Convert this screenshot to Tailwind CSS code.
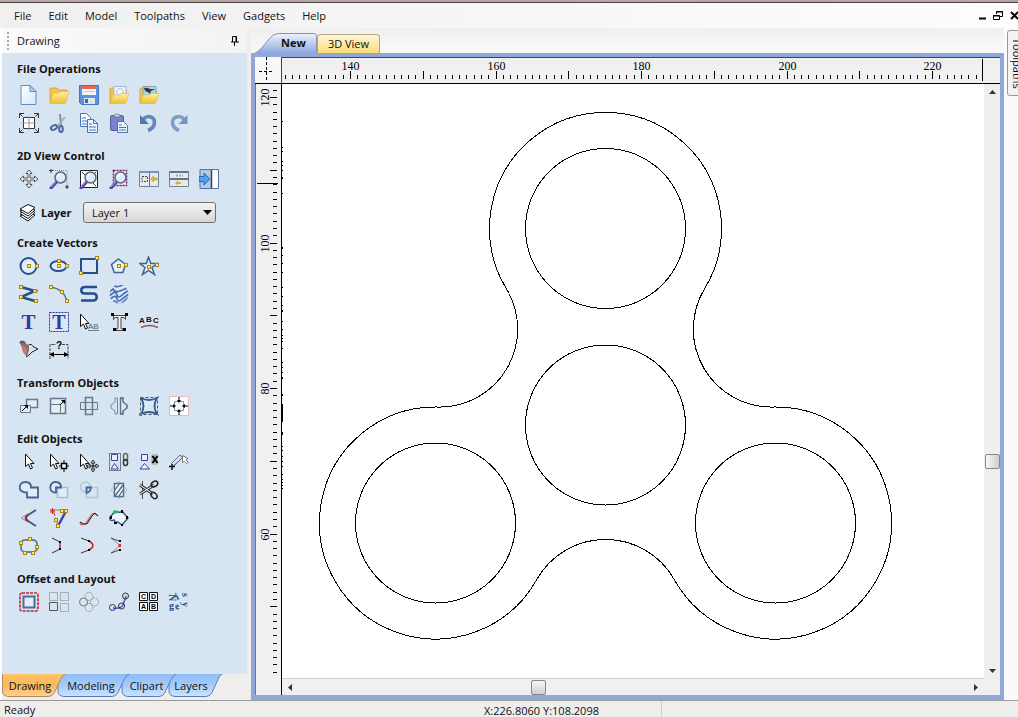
<!DOCTYPE html>
<html lang="en">
<head>
<meta charset="utf-8">
<title>Drawing</title>
<script src="https://cdn.jsdelivr.net/npm/@tailwindcss/browser@4"></script>
</head>
<body class="h-screen overflow-hidden bg-[#f0eeed] font-['Open_Sans','Noto_Sans',sans-serif] text-[11px] leading-4 text-[#111]">

<!-- shared drawing parts -->
<svg class="absolute h-0 w-0" aria-hidden="true">
  <defs>
    <linearGradient id="gold" x1="0" y1="0" x2="0" y2="1"><stop offset="0" stop-color="#fff0a0"/><stop offset="1" stop-color="#ecc034"/></linearGradient>
    <linearGradient id="page" x1="0" y1="0" x2="1" y2="1"><stop offset="0" stop-color="#fff"/><stop offset="1" stop-color="#d4e8fb"/></linearGradient>
    <linearGradient id="blueTab" x1="0" y1="0" x2="0" y2="1"><stop offset="0" stop-color="#8fbdf8"/><stop offset=".5" stop-color="#a5cbfb"/><stop offset="1" stop-color="#cfe2fb"/></linearGradient>
    <linearGradient id="orangeTab" x1="0" y1="0" x2="0" y2="1"><stop offset="0" stop-color="#fdc567"/><stop offset=".5" stop-color="#fcb659"/><stop offset="1" stop-color="#fdd29a"/></linearGradient>
    <linearGradient id="newTab" x1="0" y1="0" x2="0" y2="1"><stop offset="0" stop-color="#eef3fd"/><stop offset="1" stop-color="#8ea9e0"/></linearGradient>
    <symbol id="h" viewBox="0 0 4 4"><rect x=".5" y=".5" width="3" height="3" fill="#ffee55" stroke="#a8851c"/></symbol>
    <symbol id="lens" viewBox="0 0 20 20">
      <path d="M2 19 8 12.500" stroke="#4a3fa8" stroke-width="3" stroke-linecap="round"/>
      <path d="M2 18 7 12.500" stroke="#b9b2f0" stroke-width="1"/>
      <circle cx="11.500" cy="8.500" r="5.500" fill="#dcecf8" stroke="#5f6878" stroke-width="1.500"/>
      <path d="M8.500 7.500q1-2 3-2.500" stroke="#fff" stroke-width="1.500" fill="none"/>
    </symbol>
    <symbol id="arrow" viewBox="0 0 20 20"><path d="M6.500 2v12.500l3-2.500 2 5 2-1-2-4.500H15z" fill="#fff" stroke="#111"/></symbol>
    <symbol id="arrowSide" viewBox="0 0 20 20"><path d="M1.500 2v12.500l3-2.500 2 5 2-1-2-4.500H10z" fill="#fff" stroke="#111"/></symbol>
  </defs>
</svg>

<div class="flex h-full flex-col">
  <div class="h-[3px] shrink-0 border-b border-[#444] bg-[#b8a4a4]"></div>

  <header class="flex h-[25px] shrink-0 items-center justify-between bg-linear-to-r from-[#f1f0f0] to-[#fdfdfd] pl-[14px]">
    <nav class="flex gap-[17px]">
      <button>File</button><button>Edit</button><button>Model</button><button>Toolpaths</button><button>View</button><button>Gadgets</button><button>Help</button>
    </nav>
    <div class="flex items-center gap-1">
      <button aria-label="Minimize"><svg class="size-3" viewBox="0 0 12 12"><path d="M3 8.500h7" stroke="#000" stroke-width="2"/></svg></button>
      <button aria-label="Restore"><svg class="size-3" viewBox="0 0 12 12" fill="none" stroke="#000"><path d="M4.500 4V1.500h6v5H8M4 2h7"/><path d="M1.500 5.500h6v4h-6zM1 6h7"/></svg></button>
      <button aria-label="Close"><svg class="h-3 w-[10px]" viewBox="0 0 10 12"><path d="m3 2 7 7M3 9l7-7" stroke="#000" stroke-width="2"/></svg></button>
    </div>
  </header>

  <main class="flex min-h-0 flex-1">
    <!-- tool panel -->
    <aside class="flex w-[247px] shrink-0 flex-col border-l-2 border-white">
      <div class="flex h-[25px] shrink-0 items-center gap-2 bg-linear-to-r from-[#fafafa] to-[#f3f3f3] pr-[7px] pl-[5px]">
        <span class="h-[18px] border-l-2 border-dotted border-[#aaa]"></span>
        <span class="flex-1">Drawing</span>
        <button aria-label="Pin"><svg class="size-[10px]" viewBox="0 0 10 10" fill="none" stroke="#000"><path d="M2.500 6V.5h4V6M6 1v5M1 6h8M4.500 6v4"/></svg></button>
      </div>

      <div class="flex-1 overflow-hidden bg-[#d7e4f1] pl-[15px]">
        <section>
          <h2 class="pt-[6px] pb-[2px] font-bold leading-5">File Operations</h2>
          <div class="flex h-7 items-center gap-[10px] pl-[2px]">
            <button aria-label="New"><svg class="size-5" viewBox="0 0 20 20"><path d="M2 .5h9l6 6v13H2z" fill="url(#page)" stroke="#5c8fc4"/><path d="M11 .5v6h6z" fill="#b4d4f4" stroke="#5c8fc4"/></svg></button>
            <button aria-label="Open"><svg class="size-5" viewBox="0 0 20 20"><path d="M1 18V4l1-1h6l2 2h8v5" fill="#f1c64c" stroke="#d8a836"/><path d="M1 18.500 4 8h6l2-1.500h8L17 17q-.5 1.500-2 1.500z" fill="url(#gold)" stroke="#e0b23a" stroke-width=".6"/></svg></button>
            <button aria-label="Save"><svg class="size-5" viewBox="0 0 20 20"><path d="M.5.5h19v19h-17l-2-2z" fill="#5b94d8" stroke="#4179bd"/><path d="M3 1h14v9H3z" fill="#f3f6fb"/><path d="M3 1h14v3H3z" fill="#e8694e"/><path d="M5 13h11v6H5z" fill="#dfe5ec"/><path d="M6 14h3v4H6z" fill="#416a9c"/><path d="M4 6.500h12" stroke="#c9ced6"/></svg></button>
            <button aria-label="Import vectors"><svg class="size-5" viewBox="0 0 20 20"><path d="M1 18V4l1-1h4l2 2h9v5" fill="#f1c64c" stroke="#d8a836"/><path d="M5 1.500h12v10H5z" fill="#f2f7fd" stroke="#9eb6cf"/><circle cx="11" cy="7" r="3.500" fill="none" stroke="#b5c0cc"/><path d="M1 18.500 4 10h6l2-1.500h8L17 17q-.5 1.500-2 1.500z" fill="url(#gold)" stroke="#e0b23a" stroke-width=".6"/></svg></button>
            <button aria-label="Import bitmap"><svg class="size-5" viewBox="0 0 20 20"><path d="M1 18V4l1-1h4l2 2h9v5" fill="#f1c64c" stroke="#d8a836"/><path d="M4 1.500h13v9H4z" fill="#9fdcea" stroke="#7faab8"/><path d="M5 3q3-1 6 1h5l-4 2-1 3-2-2q-3 0-4-4" fill="#4a3030"/><path d="M1 18.500 4 10h6l2-1.500h8L17 17q-.5 1.500-2 1.500z" fill="url(#gold)" stroke="#e0b23a" stroke-width=".6"/></svg></button>
          </div>
          <div class="flex h-7 items-center gap-[10px] pl-[2px]">
            <button aria-label="Job setup"><svg class="size-5" viewBox="0 0 20 20"><path d="M4.500 4.500h11v11h-11z" fill="#fff" stroke="#333"/><path d="M10 3v14M3 10h14" stroke="#999"/><path d="M.5 5V.5H5M15 .5h4.500V5M.5 15v4.500H5M15 19.500h4.500V15M1 1l2.500 2.500M19 1l-2.500 2.500M1 19l2.500-2.500M19 19l-2.500-2.500" fill="none" stroke="#333"/></svg></button>
            <button aria-label="Cut"><svg class="size-5" viewBox="0 0 20 20" fill="none"><path d="m11 1 1 11" stroke="#7d91a8" stroke-width="2"/><path d="m16 4-8 10" stroke="#a1b1c2" stroke-width="2"/><ellipse cx="5" cy="14.500" rx="3.300" ry="2" stroke="#48689c" stroke-width="2" transform="rotate(-25 5 14.500)"/><ellipse cx="12" cy="16" rx="1.800" ry="3" stroke="#48689c" stroke-width="2"/></svg></button>
            <button aria-label="Copy"><svg class="size-5" viewBox="0 0 20 20" stroke="#4376b4"><path d="M1.500.5h6l4 4v9h-10z" fill="#f7fbff"/><path d="M3 5h4m-4 3h6m-6 3h6" /><path d="M8.500 6.500h6l4 4v9h-10z" fill="#eef6ff"/><path d="M14.500 6.500v4h4M10 11h3m-3 3h7m-7 3h7" fill="none"/></svg></button>
            <button aria-label="Paste"><svg class="size-5" viewBox="0 0 20 20"><rect x="1.500" y="2.500" width="13" height="15" rx="1.500" fill="#7b80cf" stroke="#565ba8"/><path d="M5 4V2h1.500L8 .5 9.500 2H11v2z" fill="#d9d9df" stroke="#777"/><path d="M8.500 8.500h6l4 4v7h-10z" fill="#eef6ff" stroke="#4376b4"/><path d="M10 12h3m-3 2.500h7M10 17h7" stroke="#4376b4"/></svg></button>
            <button aria-label="Undo"><svg class="size-5" viewBox="0 0 20 20" fill="none"><path d="M4 6.500C9 1 16 4 15.500 10c-.3 3-3 6-6.500 7.500" stroke="#6389bc" stroke-width="3.600"/><path d="M1 2v9h9z" fill="#5378ae"/></svg></button>
            <button aria-label="Redo"><svg class="size-5" viewBox="0 0 20 20" fill="none"><path d="M15.500 6.500C10 1 3 4 3.500 10c.3 3 3 6 6.500 7.500" stroke="#7d9fc5" stroke-width="3.600"/><path d="M18.500 2v9h-9z" fill="#7594bb"/></svg></button>
          </div>
        </section>

        <section>
          <h2 class="pt-[10px] font-bold leading-[18px]">2D View Control</h2>
          <div class="flex h-7 items-center gap-[10px] pl-[2px]">
            <button aria-label="Pan"><svg class="size-5" viewBox="0 0 20 20"><path d="m10 1 3 3.500h-2V9h4.500V7L19 10l-3.500 3v-2H11v4.500h2L10 19l-3-3.500h2V11H4.500v2L1 10l3.500-3v2H9V4.500H7z" fill="#f2f2f2" stroke="#555"/></svg></button>
            <button aria-label="Zoom"><svg class="size-5" viewBox="0 0 20 20"><path d="M2 1.500h16v17" fill="none" stroke="#7e8b9b" stroke-dasharray="1 1"/><path d="M0 1.500h4M2 0v4M16 18h4M18 16v4" stroke="#334"/><use href="#lens"/></svg></button>
            <button aria-label="Zoom to fit"><svg class="size-5" viewBox="0 0 20 20"><path d="M1.500 1.500h17v17h-17z" fill="#fff" stroke="#222"/><path d="m3 3 3 3m11-3-3 3m3 11-3-3" stroke="#333"/><use href="#lens"/></svg></button>
            <button aria-label="Zoom selected"><svg class="size-5" viewBox="0 0 20 20"><path d="M4.500 1.500h13v15h-13z" fill="#f5e9f6" stroke="#6b1d6b" stroke-width="1.500" stroke-dasharray="2 1"/><use href="#lens"/></svg></button>
            <button aria-label="Tile vertically"><svg class="size-5" viewBox="0 0 20 20"><path d="M.5 2.500h19v15H.5z" fill="#e7e9ec" stroke="#76808e"/><path d="M.5 3h19" stroke="#7c8fc6" stroke-width="2"/><path d="M10.500 3v14" stroke="#69738a"/><path d="M3 7.500h5.500v5H3z" fill="none" stroke="#444" stroke-dasharray="2 1"/><path d="m11.500 10 3-3v2H18v2h-3.500v2z" fill="#e5bd2b" stroke="#ad8a15" stroke-width=".5"/></svg></button>
            <button aria-label="Tile horizontally"><svg class="size-5" viewBox="0 0 20 20"><path d="M.5 2.500h19v15H.5z" fill="#e7e9ec" stroke="#76808e"/><path d="M.5 3h19M.5 10h19" stroke="#65728d" stroke-width="2"/><path d="M7 6.500h7" stroke="#aaa" stroke-dasharray="2 1" stroke-width="2"/><path d="m6 14 3-2.500V13h3v2H9v1.500z" fill="#d8ae24"/></svg></button>
            <button aria-label="Switch to toolpaths"><svg class="size-5" viewBox="0 0 20 20"><path d="M1 .5h18.500v19H1z" fill="#b6c8e4" stroke="#5572a8"/><path d="M13 1h6v18h-6z" fill="#fff"/><path d="M12.500 1v18" stroke="#33415e" stroke-width="1.500"/><path d="M0 7.500h5V4l6 6-6 6v-3.500H0z" fill="#4da3f0" stroke="#246bbd"/></svg></button>
          </div>
          <div class="flex h-[31px] items-center gap-1 pt-2 pl-[2px]">
            <svg class="size-[18px]" viewBox="0 0 18 18" fill="#fff" stroke="#111"><path d="m1 12 9-4 6 3-7 6z"/><path d="m1 9.500 9-4 6 3-7 6z"/><path d="m1 7 9-4 6 3-7 6z"/><path d="m1 5 8-4.500 7 3-7 6z"/></svg>
            <label for="layer" class="w-[38px] font-bold">Layer</label>
            <div class="relative">
              <select id="layer" class="h-[21px] w-[133px] appearance-none rounded-[3px] border border-[#707070] bg-linear-to-b from-[#f3f3f3] to-[#d6d6d6] pl-2 text-[11px] leading-4"><option>Layer 1</option></select>
              <svg class="pointer-events-none absolute top-2 right-1 h-[5px] w-[9px]" viewBox="0 0 9 5"><path d="M0 0h9L4.500 5z"/></svg>
            </div>
          </div>
        </section>

        <section>
          <h2 class="pt-[10px] font-bold leading-[18px]">Create Vectors</h2>
          <div class="flex h-7 items-center gap-[10px] pl-[2px]">
            <button aria-label="Circle"><svg class="size-5" viewBox="0 0 20 20"><circle cx="9.500" cy="10" r="8" fill="#e3effa" stroke="#234f8c" stroke-width="2"/><use href="#h" x="8" y="8" width="4" height="4"/><use href="#h" x="16" y="8" width="4" height="4"/></svg></button>
            <button aria-label="Ellipse"><svg class="size-5" viewBox="0 0 20 20"><ellipse cx="9.500" cy="10" rx="8" ry="5" fill="#e3effa" stroke="#234f8c" stroke-width="2"/><use href="#h" x="8" y="8" width="4" height="4"/><use href="#h" x="8" y="3" width="4" height="4"/><use href="#h" x="16" y="8" width="4" height="4"/></svg></button>
            <button aria-label="Rectangle"><svg class="size-5" viewBox="0 0 20 20"><path d="M2 3h16v14H2z" fill="#d9e7f6" stroke="#234f8c" stroke-width="2"/><use href="#h" x="16" y="0" width="4" height="4"/><use href="#h" x="0" y="15" width="4" height="4"/></svg></button>
            <button aria-label="Polygon"><svg class="size-5" viewBox="0 0 20 20"><path d="m9.500 3 7 5.500-2.700 8H5.200L2.500 8.500z" fill="#e3effa" stroke="#3d6493" stroke-width="1.500"/><use href="#h" x="8" y="8" width="4" height="4"/><use href="#h" x="15" y="7" width="4" height="4"/></svg></button>
            <button aria-label="Star"><svg class="size-5" viewBox="0 0 20 20"><path d="m9.500 1 2.200 6.500H18L13 11.500l2.500 7-6-4-6 4 2.500-7-5-4h6.300z" fill="#e3effa" stroke="#3d6493" stroke-width="1.500"/><use href="#h" x="8" y="9" width="4" height="4"/><use href="#h" x="16" y="7" width="4" height="4"/></svg></button>
          </div>
          <div class="flex h-7 items-center gap-[10px] pl-[2px]">
            <button aria-label="Polyline"><svg class="size-5" viewBox="0 0 20 20"><path d="m2 3 14 4L2 13l14 4" fill="none" stroke="#234f8c" stroke-width="2.500"/><use href="#h" x="0" y="1" width="4" height="4"/><use href="#h" x="14" y="5" width="4" height="4"/><use href="#h" x="0" y="11" width="4" height="4"/><use href="#h" x="15" y="15" width="4" height="4"/></svg></button>
            <button aria-label="Arc"><svg class="size-5" viewBox="0 0 20 20"><path d="M2 3q13 2 16 14" fill="none" stroke="#5e6f87" stroke-width="1.500"/><use href="#h" x="0" y="1" width="4" height="4"/><use href="#h" x="11" y="6" width="4" height="4"/><use href="#h" x="16" y="15" width="4" height="4"/></svg></button>
            <button aria-label="Curve"><svg class="size-5" viewBox="0 0 20 20"><path d="M18 3H6C1 3 1 9.500 6 9.500h8c5 0 5 7 0 7H2" fill="none" stroke="#234f8c" stroke-width="2.500"/></svg></button>
            <button aria-label="Texture"><svg class="size-5" viewBox="0 0 20 20" fill="none" stroke="#4a6fb5" stroke-width="1.700"><clipPath id="disc"><circle cx="10" cy="10" r="9.500"/></clipPath><g clip-path="url(#disc)"><path d="M0 0h20v20H0z" fill="#dfe9f6" stroke="none"/><path d="M-1 5 4 0q2 4 7 2t9-3M-1 9l5-4q2 4 7 2t9-4M-1 13l5-4q3-2 4 2t5 0l7-5M-1 17l5-4q3-2 4 2t5 0l7-5M3 19q2-4 5 0t6-1l6-5"/></g></svg></button>
          </div>
          <div class="flex h-7 items-center gap-[10px] pl-[2px]">
            <button aria-label="Text"><svg class="size-5 overflow-visible" viewBox="0 0 20 20"><text x="9.500" y="17" text-anchor="middle" font-family="Liberation Serif" font-weight="bold" font-size="21" fill="#343a9b">T</text></svg></button>
            <button aria-label="Text in box"><svg class="size-5 overflow-visible" viewBox="0 0 20 20"><path d="M.5.5h19v19H.5z" fill="#dce7f5" stroke="#25309a" stroke-dasharray="2 1"/><text x="10" y="17" text-anchor="middle" font-family="Liberation Serif" font-weight="bold" font-size="20" fill="#343a9b">T</text></svg></button>
            <button aria-label="Edit text"><svg class="size-5 overflow-visible" viewBox="0 0 20 20"><use href="#arrowSide"/><text x="9" y="17" font-family="Liberation Sans" font-size="8" fill="#52627a">AB</text><path d="M9 18.500h11" stroke="#6e8098"/></svg></button>
            <button aria-label="Text outline"><svg class="size-5 overflow-visible" viewBox="0 0 20 20"><path d="M4.500 3.500h12v4l-1.500-2h-3v11l2 .5v1.500H7V17l2-.5v-11H6l-1.500 2z" fill="#f2f2f2" stroke="#444"/><path d="M2 1h3v3H2zm14 0h3v3h-3zM4 16h3v3H4zm10 0h3v3h-3z"/></svg></button>
            <button aria-label="Text on curve"><svg class="size-5 overflow-visible" viewBox="0 0 20 20"><g font-family="Liberation Sans" font-weight="bold" font-size="8" fill="#111"><text x="0" y="11">A</text><text x="7" y="10">B</text><text x="14" y="11">C</text></g><path d="M2 15.500q8-4 17 0" fill="none" stroke="#9a5660" stroke-width="1.500"/></svg></button>
          </div>
          <div class="flex h-7 items-center gap-[10px] pl-[2px]">
            <button aria-label="Trace bitmap"><svg class="size-5" viewBox="0 0 20 20"><path d="M1 3q2-2 5 0l4 2v5l-2 7-4-5Q3 7 1 3" fill="#946a66"/><path d="M3 6q3 0 5 4l-1 5-3-4z" fill="#c9786e"/><path d="M10 4.500q3-1 4 2l5 2.500-6 3-3 3-3 2" fill="none" stroke="#222"/><path d="M1 3q2-3 5 0" stroke="#555" fill="none" stroke-width="2"/></svg></button>
            <button aria-label="Dimensions"><svg class="size-5" viewBox="0 0 20 20"><path d="M1 19V4.500h6m6 0h6V19" fill="none" stroke="#444" stroke-dasharray="3 1"/><text x="10" y="9" text-anchor="middle" font-family="Liberation Sans" font-weight="bold" font-size="10">?</text><path d="M2 14.500h16" stroke="#000"/><path d="M0 14.500 5 12v5zm20 0L15 12v5z"/></svg></button>
          </div>
        </section>

        <section>
          <h2 class="pt-[10px] font-bold leading-[18px]">Transform Objects</h2>
          <div class="flex h-7 items-center gap-[10px] pl-[2px]">
            <button aria-label="Move"><svg class="size-5" viewBox="0 0 20 20" fill="#e4ecf4" stroke="#68788b"><path d="M7.500 3.500h11v8h-11z" stroke-width="1.500"/><path d="M1.500 9.500h10v7h-10z"/><path d="m3 15 5-5" stroke="#000"/><path d="M5 9h4v4z" fill="#000" stroke="none"/></svg></button>
            <button aria-label="Size"><svg class="size-5" viewBox="0 0 20 20" fill="#e4ecf4" stroke="#68788b"><path d="M1.500 2.500h15v15h-15z" stroke-width="1.500"/><path d="M1.500 8.500h10v9" /><path d="m11 9 4-4" stroke="#000"/><path d="M12 4h4v4z" fill="#000" stroke="none"/></svg></button>
            <button aria-label="Align"><svg class="size-5" viewBox="0 0 20 20" fill="none" stroke="#68788b"><path d="M6.500 1.500h7v17h-7z" stroke-width="1.500"/><path d="M1.500 6.500h17v7h-17z"/></svg></button>
            <button aria-label="Mirror"><svg class="size-5" viewBox="0 0 20 20" fill="none" stroke="#7a8797"><path d="M8.500 2H6v4L2 9v3l4 3v3h2.500zM11.500 2H14v4l4 3v3l-4 3v3h-2.500z"/><path d="M11.500 2H14v4l4 3v3l-4 3v3h-2.500z" stroke="#5d6f88" stroke-width="1.300"/></svg></button>
            <button aria-label="Distort"><svg class="size-5" viewBox="0 0 20 20" fill="none"><path d="M1.500 1.500h17v17h-17z" stroke="#555" stroke-dasharray="3 2"/><path d="M2 2q8 4 16 0-5 8 0 16-8-4-16 0 5-8 0-16" fill="#dbe9f5" stroke="#315d96" stroke-width="1.800"/><path d="M0 17h3v3H0z" fill="#39a849"/></svg></button>
            <button aria-label="Center"><svg class="size-5" viewBox="0 0 20 20"><path d="M.5.5h19v19H.5z" fill="#fff" stroke="#eab7bd"/><path d="M5.500 5.500h9v9h-9z" fill="#f3f7fb" stroke="#7f96b0"/><path d="M10 1v5m0 8v5M1 10h5m8 0h5" stroke="#000"/><path d="M8 4h4l-2 3zm0 12h4l-2-3zM4 8v4l3-2zm12 0v4l-3-2z"/></svg></button>
          </div>
        </section>

        <section>
          <h2 class="pt-[10px] font-bold leading-[18px]">Edit Objects</h2>
          <div class="flex h-7 items-center gap-[10px] pl-[2px]">
            <button aria-label="Select"><svg class="size-5" viewBox="0 0 20 20"><use href="#arrow"/></svg></button>
            <button aria-label="Node editing"><svg class="size-5" viewBox="0 0 20 20"><use href="#arrowSide"/><path d="M12.500 11.500h5v5h-5z" fill="#fff" stroke="#000" stroke-width="1.500"/><path d="M15 8v3m0 6v3m-5-6h2m6 0h2" stroke="#000"/></svg></button>
            <button aria-label="Interactive transform"><svg class="size-5" viewBox="0 0 20 20"><use href="#arrowSide"/><path d="M14 9v10M9 14h10" stroke="#000"/><path d="m12 11 2-3 2 3zm0 6 2 3 2-3zm-1-5-3 2 3 2zm6 0 3 2-3 2z" fill="#fff" stroke="#000" stroke-width=".8"/></svg></button>
            <button aria-label="Group"><svg class="size-5" viewBox="0 0 20 20" fill="none"><path d="M.5 1.500h11v17H.5z" stroke="#111" stroke-dasharray="1 1"/><path d="M2.500 2.500h6v6h-6zm3 9 4 5.500H2z" fill="#eef" stroke="#3c3fa5"/><rect x="14.500" y="1.500" width="4" height="7" rx="2" stroke="#656565" stroke-width="1.500"/><rect x="14.500" y="7.500" width="4" height="6" rx="2" stroke="#333" stroke-width="1.500"/></svg></button>
            <button aria-label="Ungroup"><svg class="size-5" viewBox="0 0 20 20"><path d="M2.500 2.500h6v6h-6zm3 9 5 5.500H1z" fill="#eef" stroke="#3c3fa5"/><rect x="12" y="2" width="7" height="11" rx="2" fill="#bbb"/><path d="m13.500 4 5 7m0-7-5 7" stroke="#000" stroke-width="2"/></svg></button>
            <button aria-label="Measure"><svg class="size-5" viewBox="0 0 20 20" fill="none"><path d="m2 12 9-9 2 2m-9 10 9-9" stroke="#657086"/><path d="m3 15 10-9" stroke="#5b5be0" stroke-dasharray="2 1"/><path d="M0 14.500h6M3 12v6" stroke="#111" stroke-width="1.500"/><path d="M13.500 3.500v7l2-1 2 2 1.500-1-2-3 2-1z" fill="#fff" stroke="#777"/></svg></button>
          </div>
          <div class="flex h-7 items-center gap-[10px] pl-[2px]">
            <button aria-label="Weld"><svg class="size-5" viewBox="0 0 20 20"><path d="M12 7.500h7v10H8v-5C-2 13-1 2 6.500 2 10 2 12 4 12 7.500z" fill="#e2ecf6" stroke="#3e6594" stroke-width="1.800"/></svg></button>
            <button aria-label="Subtract"><svg class="size-5" viewBox="0 0 20 20" fill="#e2ecf6"><path d="M8.500 7.500h10v10h-10z" stroke="#a9bdd2" stroke-width="1.500"/><path d="M12 7.500H7v5C-1 13 0 2 6.500 2 10 2 12 4 12 7.500z" stroke="#3e6594" stroke-width="1.800"/></svg></button>
            <button aria-label="Intersect"><svg class="size-5" viewBox="0 0 20 20" fill="none"><circle cx="6.500" cy="7" r="5" stroke="#b5c6d8" stroke-width="1.500"/><path d="M7.500 7.500h11v10h-11z" stroke="#b5c6d8" stroke-width="1.500"/><path d="M12 7.500H7.500V13q4-1 4.500-5.500z" fill="#dbe7f3" stroke="#3e6594" stroke-width="1.800"/></svg></button>
            <button aria-label="Hatch"><svg class="size-5" viewBox="0 0 20 20" fill="none"><path d="M2 10 10 1l8 9-8 9z" stroke="#b2bfce"/><path d="M5.500 3.500h9v13h-9z" fill="#f4f8fb" stroke="#526f91" stroke-width="1.500"/><path d="m6 10 4-6m-4 12 8-11m-4 11 4-6" stroke="#47648c" stroke-width="1.300"/></svg></button>
            <button aria-label="Trim"><svg class="size-5" viewBox="0 0 20 20" fill="none"><path d="M3.500 1v18" stroke="#555"/><path d="m1 5 13 9M1 14 15 5" stroke="#333" stroke-width="3"/><path d="m1 5 13 9M1 14 15 5" stroke="#fff"/><ellipse cx="15.500" cy="4" rx="3.500" ry="2.500" stroke="#222" stroke-width="1.500" transform="rotate(-35 15.500 4)"/><ellipse cx="15" cy="15.500" rx="3.500" ry="2.500" stroke="#222" stroke-width="1.500" transform="rotate(45 15 15.500)"/></svg></button>
          </div>
          <div class="flex h-7 items-center gap-[10px] pl-[2px]">
            <button aria-label="Fillet"><svg class="size-5" viewBox="0 0 20 20" fill="none"><path d="m9 6-7 4 7 4" stroke="#8a94a2"/><path d="M17 2 9 7q-5 3 0 6l8 5" stroke="#37598b" stroke-width="2"/><path d="M9.500 6.500q-5 3.500 0 7" stroke="#b02837" stroke-width="2"/></svg></button>
            <button aria-label="Extend"><svg class="size-5" viewBox="0 0 20 20" fill="none"><path d="m5 5 4 13" stroke="#a34040" stroke-dasharray="3 2"/><path d="M5 2h10" stroke="#888"/><path d="m9 18 8-15" stroke="#3e46a0" stroke-width="2.500"/><path d="M1 3h5M3.500 0v6m-2-5 4 4m-4 0 4-4" stroke="#d22"/><use href="#h" x="11" y="1" width="4" height="4"/><use href="#h" x="15" y="1" width="4" height="4"/><use href="#h" x="5" y="10" width="4" height="4"/><use href="#h" x="7" y="16" width="4" height="4"/></svg></button>
            <button aria-label="Fit curves"><svg class="size-5" viewBox="0 0 20 20" fill="none"><path d="M1 14q1 5 6 1l5-7q2-5 7 0" stroke="#d06a6a" stroke-width="1.500"/><path d="m1 14 4 2h3l5-8 3-3 3 3" stroke="#222"/></svg></button>
            <button aria-label="Join vectors"><svg class="size-5" viewBox="0 0 20 20"><path d="M3 7q2-4 6-3 2 1 4-1l6 7-6 7-4-3q-3 1-4-2Q0 14 1 9z" fill="#edf4fb" stroke="#34599c" stroke-width="1.500"/><circle cx="6" cy="4" r="2" fill="#26c943"/><path d="M1 8h2v3H1zm11-6h2v3h-2zm5 6h2v3h-2zm-5 8h2v2h-2zm-7-2h3v2H5z"/></svg></button>
          </div>
          <div class="flex h-7 items-center gap-[10px] pl-[2px]">
            <button aria-label="Boundary"><svg class="size-5" viewBox="0 0 20 20"><rect x="2" y="4" width="16" height="12" rx="4" fill="#dfe9f3" stroke="#6d8199" stroke-width="2"/><use href="#h" x="0" y="5" width="4" height="4"/><use href="#h" x="9" y="1" width="4" height="4"/><use href="#h" x="16" y="9" width="4" height="4"/><use href="#h" x="12" y="15" width="4" height="4"/><use href="#h" x="4" y="15" width="4" height="4"/></svg></button>
            <button aria-label="Join with line"><svg class="size-5" viewBox="0 0 20 20" fill="none"><path d="m3 2 8 4M3 17l8-4" stroke="#333"/><path d="M11 6v7" stroke="#c22a3c" stroke-width="1.500"/><path d="M10 5h2v2h-2zm0 7h2v2h-2z" fill="#000"/></svg></button>
            <button aria-label="Join with curve"><svg class="size-5" viewBox="0 0 20 20" fill="none"><path d="m2 2 8 3M2 17l8-3" stroke="#333"/><path d="M10 5q8 4.500 0 9" stroke="#c22a3c" stroke-width="1.500"/><path d="M9 4h2v2H9zm0 9h2v2H9z" fill="#000"/></svg></button>
            <button aria-label="Join by moving"><svg class="size-5" viewBox="0 0 20 20" fill="none"><path d="m2 2 9 7.500L2 17" stroke="#999"/><path d="m2 2 8 3M2 17l8-3" stroke="#444"/><path d="M10 4h2v2h-2zm0 9h2v2h-2z" fill="#000"/><path d="M9.500 8H12v3H9.500z" fill="#d32"/></svg></button>
          </div>
        </section>

        <section>
          <h2 class="pt-[10px] font-bold leading-[18px]">Offset and Layout</h2>
          <div class="flex h-7 items-center gap-[10px] pl-[2px]">
            <button aria-label="Offset"><svg class="size-5" viewBox="0 0 20 20"><rect x="1" y="1" width="18" height="18" rx="2" fill="none" stroke="#c5232f" stroke-width="1.600" stroke-dasharray="3 1"/><path d="M4.500 4.500h11v11h-11z" fill="#e2edf8" stroke="#4a6e9b" stroke-width="2"/></svg></button>
            <button aria-label="Array copy"><svg class="size-5" viewBox="0 0 20 20" fill="none" stroke="#777"><path d="M.5.5h8v8h-8zm11 0h8v8h-8zm0 11h8v8h-8z" stroke-dasharray="1 1"/><path d="M.5 10.500h8v8h-8z" stroke="#555"/></svg></button>
            <button aria-label="Circular copy"><svg class="size-5" viewBox="0 0 20 20" fill="none" stroke="#777"><g stroke-dasharray="1 1"><circle cx="10" cy="4.500" r="4"/><circle cx="15.500" cy="10" r="4"/><circle cx="10" cy="15.500" r="4"/></g><circle cx="4.500" cy="10" r="4"/></svg></button>
            <button aria-label="Copy along vectors"><svg class="size-5" viewBox="0 0 20 20" fill="none"><path d="M4 16q8 1 10-3 2-6 3-9" stroke="#4a50d0" stroke-width="1.500"/><g stroke="#333"><circle cx="3.500" cy="15.500" r="3"/><circle cx="12.500" cy="14" r="3"/><circle cx="16.500" cy="4" r="3"/></g></svg></button>
            <button aria-label="Nest"><svg class="size-5" viewBox="0 0 20 20"><path d="M.5.5h8v8h-8zm10 0h8v8h-8zm-10 10h8v8h-8zm10 0h8v8h-8z" fill="#fff" stroke="#111"/><g font-family="Liberation Sans" font-weight="bold" font-size="7" text-anchor="middle"><text x="4.500" y="7">C</text><text x="14.500" y="7">D</text><text x="4.500" y="17">A</text><text x="14.500" y="17">B</text></g></svg></button>
            <button aria-label="Nesting"><svg class="size-5 overflow-visible" viewBox="0 0 20 20"><g font-family="Liberation Serif" font-weight="bold" font-size="10" fill="#27508c"><text transform="translate(0 2) rotate(90)">N</text><text transform="translate(8 8) rotate(-25)">i</text><text transform="translate(13 1) rotate(90)">s</text><text x="0" y="17">g</text><text transform="translate(7 18) rotate(-20)">e</text><text transform="translate(13 10) rotate(90)">y</text></g></svg></button>
          </div>
        </section>
      </div>

      <!-- panel tabs -->
      <div class="isolate flex h-[26px] shrink-0 items-start">
        <button class="relative z-40 h-[23px] w-16 pr-2"><svg class="absolute inset-0 -z-10 h-full w-full" viewBox="0 0 64 23"><path d="M.5 0v17q0 5 6 5.500h40q4 0 6-4l6-13Q60 1 63.500 0" fill="url(#orangeTab)" stroke="#b08a58"/></svg>Drawing</button>
        <button class="relative z-30 -ml-[10px] h-[23px] w-[74px] pr-1"><svg class="absolute inset-0 -z-10 h-full w-full" viewBox="0 0 74 23"><path d="M2 0v17q0 5 6 5.500h48q4 0 6-4l6-13Q70 1 73.500 0" fill="url(#blueTab)" stroke="#5580bd"/></svg>Modeling</button>
        <button class="relative z-20 -ml-[10px] h-[23px] w-[57px] pr-1"><svg class="absolute inset-0 -z-10 h-full w-full" viewBox="0 0 57 23"><path d="M2 0v17q0 5 6 5.500h31q4 0 6-4l6-13Q53 1 56.500 0" fill="url(#blueTab)" stroke="#5580bd"/></svg>Clipart</button>
        <button class="relative z-10 -ml-[10px] h-[23px] w-[56px] pr-2"><svg class="absolute inset-0 -z-10 h-full w-full" viewBox="0 0 56 23"><path d="M2 0v17q0 5 6 5.500h31q4 0 6-4l6-13Q52 1 55.500 0" fill="url(#blueTab)" stroke="#5580bd"/></svg>Layers</button>
      </div>
    </aside>

    <!-- document area -->
    <div class="ml-1 flex min-w-0 flex-1 flex-col">
      <div class="flex h-[25px] shrink-0 items-end bg-linear-to-b from-[#efefef] to-[#fafafa] pl-1">
        <button class="relative isolate h-5 w-[62px] pl-[15px] font-bold"><svg class="absolute inset-0 -z-10 h-full w-full" viewBox="0 0 62 20"><path d="M0 20Q4 19 14 6q4-5.500 9-5.500h36q2.500 0 2.500 3V20" fill="url(#newTab)" stroke="#8a94a8"/></svg>New</button>
        <button class="h-[19px] w-[63px] rounded-t-[4px] border border-b-0 border-[#b0a685] bg-linear-to-b from-[#fff6d8] to-[#fddb74]">3D View</button>
      </div>
      <div class="flex min-h-0 flex-1 flex-col border-4 border-b-[5px] border-[#91a7d8] bg-[#f0f0f0]">
        <div class="flex h-[27px] shrink-0 border-b border-black">
          <svg class="h-[25px] w-[26px] shrink-0 bg-[#f8f8f8]" viewBox="0 0 26 25" shape-rendering="crispEdges"><path d="M4 14.500h15M11.500 0v25" stroke="#000" stroke-dasharray="3 2"/></svg>
          <div class="min-w-0 flex-1 overflow-hidden border-t border-l border-[#444] bg-[#f0f0f0]">
            <svg id="topRuler" class="h-[23px] w-[720px]" viewBox="282 58 720 23" font-family="Liberation Serif" font-size="12" text-anchor="middle" shape-rendering="crispEdges"></svg>
          </div>
        </div>
        <div class="flex min-h-0 flex-1">
          <div class="w-[26px] shrink-0 overflow-hidden border-l border-[#777]">
            <svg id="sideRuler" class="h-[612px] w-[25px]" viewBox="256 84 25 612" font-family="Liberation Serif" font-size="12" text-anchor="middle" shape-rendering="crispEdges"></svg>
          </div>
          <div class="flex min-w-0 flex-1 flex-col border-l border-black">
            <div class="flex min-h-0 flex-1">
              <div class="min-w-0 flex-1 overflow-hidden border-b border-[#d0d0d0] bg-white">
                <svg class="h-[596px] w-[702px]" viewBox="282 84 702 596" fill="none" stroke="#000" shape-rendering="crispEdges" role="img" aria-label="Spinner outline">
                  <path d="M505.800 287.700A116 116 0 1 1 705.200 287.700A78 78 0 0 0 774.100 407A116 116 0 1 1 674.400 579.800A79 79 0 0 0 536.600 579.800A116 116 0 1 1 436.900 407A78 78 0 0 0 505.800 287.700Z"/>
                  <circle cx="605.500" cy="228.500" r="80"/><circle cx="605.500" cy="425" r="80"/><circle cx="435.500" cy="523" r="80"/><circle cx="775.500" cy="523" r="80"/>
                  <path d="M282.500 121v1m0 25v1m0 3v1m0 9v1m0 3v1m0 4v1m0 6v2m0 14v1m0 53v2m0 6v1m0 7v1m0 8v1m0 14v1m0 8v1m0 8v1m0 4v2m0 9v1m0 7v1m0 5v1m0 2v1m0 2v1m0 6v1m0 13v1m0 4v1m0 4v1m0 4v2m0 15v2m0 8v18m0 10v3m0 11v1m0 3v1m0 5v1m0 4v1m0 4v1m0 7v1m0 4v1m0 2v1m0 2v1m0 2v1"/>
                </svg>
              </div>
              <div class="flex w-4 shrink-0 flex-col items-center bg-[#efefef]" role="scrollbar" aria-label="Vertical scroll" aria-controls="topRuler" aria-valuenow="66" aria-orientation="vertical">
                <button class="flex h-4 w-4 items-center justify-center" aria-label="Scroll up"><svg class="h-1 w-[7px]" viewBox="0 0 7 4"><path d="M0 4h7L3.500 0z" fill="#333"/></svg></button>
                <span class="grow-[354]"></span>
                <button class="size-[15px] rounded-[2px] border border-[#888] bg-linear-to-r from-[#f7f7f7] to-[#cfcfcf]" aria-label="Vertical position"></button>
                <span class="grow-[194]"></span>
                <button class="flex h-4 w-4 items-center justify-center" aria-label="Scroll down"><svg class="h-1 w-[7px]" viewBox="0 0 7 4"><path d="M0 0h7L3.500 4z" fill="#333"/></svg></button>
              </div>
            </div>
            <div class="flex h-4 shrink-0 items-center pr-4" role="scrollbar" aria-label="Horizontal scroll" aria-controls="topRuler" aria-valuenow="35" aria-orientation="horizontal">
              <button class="flex h-4 w-4 items-center justify-center" aria-label="Scroll left"><svg class="h-[7px] w-1" viewBox="0 0 4 7"><path d="M4 0v7L0 3.500z" fill="#333"/></svg></button>
              <span class="grow-[232]"></span>
              <button class="size-[15px] rounded-[2px] border border-[#888] bg-linear-to-b from-[#f7f7f7] to-[#cfcfcf]" aria-label="Horizontal position"></button>
              <span class="grow-[421]"></span>
              <button class="flex h-4 w-4 items-center justify-center" aria-label="Scroll right"><svg class="h-[7px] w-1" viewBox="0 0 4 7"><path d="M0 0v7l4-3.500z" fill="#333"/></svg></button>
            </div>
          </div>
        </div>
      </div>
    </div>

    <!-- docked panel tab -->
    <aside class="w-[14px] shrink-0 overflow-hidden bg-[#fafafa] pt-[2px] pl-[3px]">
      <button class="flex h-[66px] w-5 items-center justify-center rounded-[3px] border border-[#999] bg-[#f3f3f3] [writing-mode:vertical-rl]">Toolpaths</button>
    </aside>
  </main>

  <footer class="flex h-[17px] shrink-0 items-center border-t border-[#999] bg-[#f0eded]">
    <span class="w-[484px] shrink-0 pt-[2px] pl-1">Ready</span>
    <span class="h-full w-[178px] border-r border-[#d0cccc] pt-[2px]">X:226.8060 Y:108.2098</span>
  </footer>
</div>

<script>
  // Rulers: 20 units span 145.5 px.
  const unit = 7.275;
  const line = (x1, y1, x2, y2) => `<path d="M${x1} ${y1}L${x2} ${y2}" stroke="#000"/>`;
  let topMarks = '';
  for (let v = 131; v <= 226; v++) {
    const x = Math.round(350 + (v - 140) * unit) + 0.5;
    topMarks += line(x, v % 10 ? 75 : 71, x, 79);
    if (v % 20 === 0) topMarks += `<text x="${x}" y="70">${v}</text>`;
  }
  topMarks += line(982.5, 59, 982.5, 81);
  document.getElementById('topRuler').innerHTML = topMarks;

  let sideMarks = '';
  for (let v = 121; v >= 41; v--) {
    const y = Math.round(97 + (120 - v) * unit) + 0.5;
    sideMarks += line(v % 10 ? 273 : 270, y, 277, y);
    if (v % 20 === 0) sideMarks += `<text transform="translate(269 ${y}) rotate(-90)">${v}</text>`;
  }
  sideMarks += line(257, 183.5, 278, 183.5);
  document.getElementById('sideRuler').innerHTML = sideMarks;
</script>
</body>
</html>
